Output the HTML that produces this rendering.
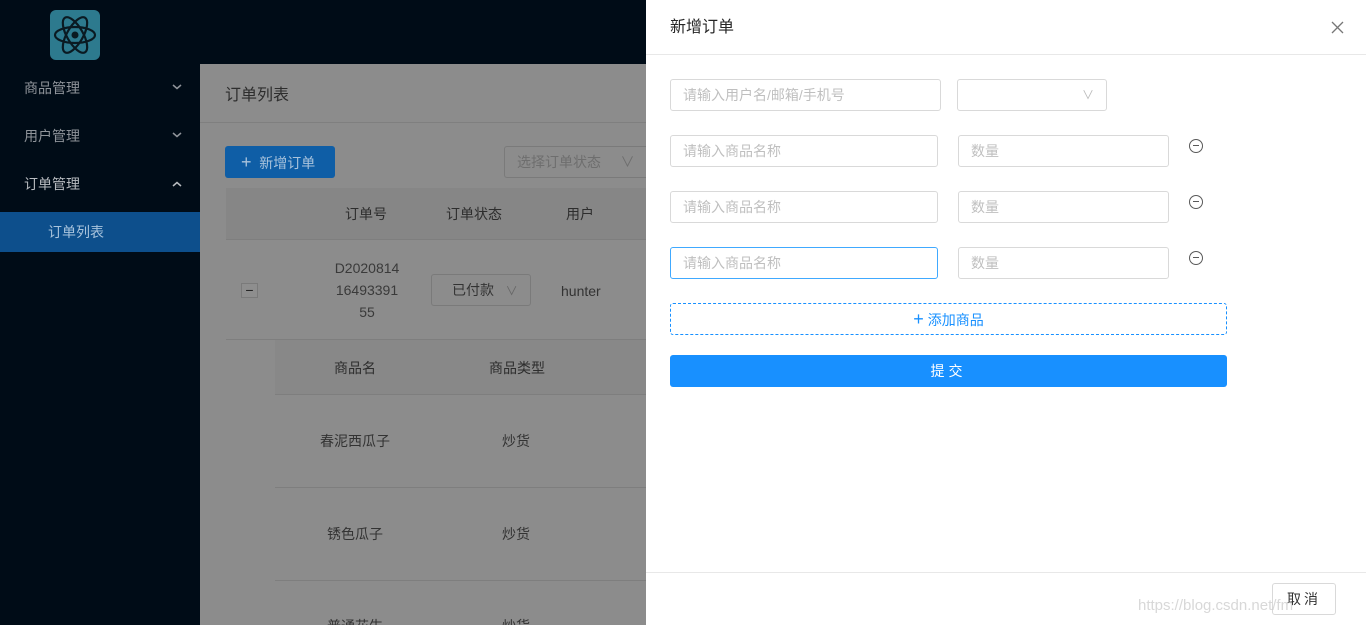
<!DOCTYPE html>
<html style="width:1366px;height:625px;overflow:hidden"><head><meta charset="utf-8"><style>
*{box-sizing:border-box;margin:0;padding:0}
body{width:1366px;height:625px;overflow:hidden;position:relative;background:#000c17;font-family:"Liberation Sans","Noto Sans CJK SC",sans-serif;font-size:14px;line-height:16px}
.a{position:absolute}
.side{left:0;top:0;width:200px;height:625px;background:#000c17}
.menu{color:#8f949a;font-size:14px}
.panel{left:200px;top:64px;width:446px;height:561px;background:#8c8c8c;overflow:hidden}
.t{color:#2d2d2d}
.inp{position:absolute;border:1px solid #d9d9d9;border-radius:3px;background:#fff;color:#bfbfbf;font-size:14px;padding-left:12px;line-height:30px;height:32px}
.minus{position:absolute;width:14px;height:14px;border:1.3px solid #595959;border-radius:50%}
.minus:after{content:"";position:absolute;left:3px;top:5px;width:6px;height:1.3px;background:#595959}
</style></head><body>
<div class="a side"></div>
<div class="a" style="left:50px;top:10px;width:50px;height:50px;border-radius:6px;background:#2d7a8e">
<svg width="50" height="50" viewBox="0 0 50 50"><g fill="none" stroke="#0a1a22" stroke-width="2.2"><ellipse cx="25" cy="25" rx="20" ry="8"/><ellipse cx="25" cy="25" rx="20" ry="8" transform="rotate(60 25 25)"/><ellipse cx="25" cy="25" rx="20" ry="8" transform="rotate(-60 25 25)"/></g><circle cx="25" cy="25" r="3.5" fill="#0a1a22"/></svg></div>
<div class="a menu" style="left:24px;top:80px">商品管理</div>
<svg class="a" style="left:172px;top:84px" width="10" height="6"><path d="M1 1l4 3.5 4-3.5" fill="none" stroke="#8f949a" stroke-width="1.5"/></svg>
<div class="a menu" style="left:24px;top:128px">用户管理</div>
<svg class="a" style="left:172px;top:132px" width="10" height="6"><path d="M1 1l4 3.5 4-3.5" fill="none" stroke="#8f949a" stroke-width="1.5"/></svg>
<div class="a" style="left:24px;top:176px;color:#b8bcc0">订单管理</div>
<svg class="a" style="left:172px;top:181px" width="10" height="6"><path d="M1 5l4-3.5 4 3.5" fill="none" stroke="#b8bcc0" stroke-width="1.5"/></svg>
<div class="a" style="left:0;top:212px;width:200px;height:40px;background:#0d4f8c"></div>
<div class="a" style="left:48px;top:224px;color:#a8c3dc">订单列表</div>
<div class="a panel">
<div class="a t" style="left:25px;top:23px;font-size:16px;line-height:18px">订单列表</div>
<div class="a" style="left:0;top:58px;width:446px;height:1px;background:#7f7f7f"></div>
<div class="a" style="left:25px;top:82px;width:110px;height:32px;background:#0f5ea6;border-radius:3px;color:#a9c3dc;line-height:32px;padding-left:16px"><span style="font-size:18px">+</span>&nbsp; 新增订单</div>
<div class="a" style="left:304px;top:82px;width:150px;height:32px;border:1px solid #7a7a7a;border-radius:3px;color:#6e6e6e;line-height:30px;padding-left:12px">选择订单状态 &nbsp;&nbsp;&nbsp;&nbsp;∨</div>
<div class="a" style="left:26px;top:124px;width:420px;height:52px;background:#868686;border-bottom:1px solid #7e7e7e"></div>
<div class="a t" style="left:145px;top:142px">订单号</div>
<div class="a t" style="left:246px;top:142px">订单状态</div>
<div class="a t" style="left:366px;top:142px">用户</div>
<div class="a" style="left:41px;top:219px;width:17px;height:15px;border:1px solid #7a7a7a;background:#8e8e8e;text-align:center;line-height:12px;color:#222">−</div>
<div class="a t" style="left:125px;top:193px;width:84px;text-align:center;line-height:22px;color:#3a3a3a">D2020814<br>16493391<br>55</div>
<div class="a" style="left:231px;top:210px;width:100px;height:32px;border:1px solid #7a7a7a;border-radius:3px;line-height:30px;padding-left:20px;color:#333">已付款 &nbsp;&nbsp;<span style="color:#666;font-size:12px">∨</span></div>
<div class="a" style="left:361px;top:219px;color:#333">hunter</div>
<div class="a" style="left:26px;top:275px;width:420px;height:1px;background:#7e7e7e"></div>
<div class="a" style="left:75px;top:276px;width:371px;height:54px;background:#888"></div>
<div class="a t" style="left:134px;top:296px">商品名</div>
<div class="a t" style="left:289px;top:296px">商品类型</div>
<div class="a" style="left:75px;top:330px;width:371px;height:1px;background:#7e7e7e"></div>
<div class="a t" style="left:120px;top:369px;color:#333">春泥西瓜子</div>
<div class="a t" style="left:302px;top:369px;color:#333">炒货</div>
<div class="a" style="left:75px;top:423px;width:371px;height:1px;background:#7e7e7e"></div>
<div class="a t" style="left:127px;top:462px;color:#333">锈色瓜子</div>
<div class="a t" style="left:302px;top:462px;color:#333">炒货</div>
<div class="a" style="left:75px;top:516px;width:371px;height:1px;background:#7e7e7e"></div>
<div class="a t" style="left:127px;top:554px;color:#333">普通花生</div>
<div class="a t" style="left:302px;top:554px;color:#333">炒货</div>
</div>
<!-- drawer -->
<div class="a" style="left:646px;top:0;width:720px;height:625px;background:#fff"></div>
<div class="a" style="left:670px;top:19px;font-size:16px;line-height:18px;color:#262626">新增订单</div>
<svg class="a" style="left:1331px;top:21px" width="13" height="13"><path d="M1 1l11 11M12 1L1 12" stroke="#777" stroke-width="1.3"/></svg>
<div class="a" style="left:646px;top:54px;width:720px;height:1px;background:#e8e8e8"></div>
<div class="inp" style="left:670px;top:79px;width:271px">请输入用户名/邮箱/手机号</div>
<div class="inp" style="left:957px;top:79px;width:150px;color:#bbb;font-size:12px;text-align:right;padding-right:12px">∨</div>
<div class="inp" style="left:670px;top:135px;width:268px">请输入商品名称</div>
<div class="inp" style="left:958px;top:135px;width:211px">数量</div>
<div class="minus" style="left:1189px;top:139px"></div>
<div class="inp" style="left:670px;top:191px;width:268px">请输入商品名称</div>
<div class="inp" style="left:958px;top:191px;width:211px">数量</div>
<div class="minus" style="left:1189px;top:195px"></div>
<div class="inp" style="left:670px;top:247px;width:268px;border-color:#40a9ff">请输入商品名称</div>
<div class="inp" style="left:958px;top:247px;width:211px">数量</div>
<div class="minus" style="left:1189px;top:251px"></div>
<div class="a" style="left:670px;top:303px;width:557px;height:32px;border:1px dashed #1890ff;border-radius:3px;color:#1890ff;text-align:center;line-height:30px"><span style="font-size:18px">+</span> 添加商品</div>
<div class="a" style="left:670px;top:355px;width:557px;height:32px;background:#1890ff;border-radius:3px;color:#fff;text-align:center;line-height:32px;letter-spacing:4px">提交</div>
<div class="a" style="left:646px;top:572px;width:720px;height:1px;background:#e8e8e8"></div>
<div class="a" style="left:1272px;top:583px;width:64px;height:32px;border:1px solid #d9d9d9;border-radius:3px;text-align:center;line-height:30px;color:#333;letter-spacing:3px">取消</div>
<div class="a" style="left:1138px;top:598px;color:rgba(200,200,200,0.7);font-size:15px">https://blog.csdn.net/fm</div>
</body></html>
